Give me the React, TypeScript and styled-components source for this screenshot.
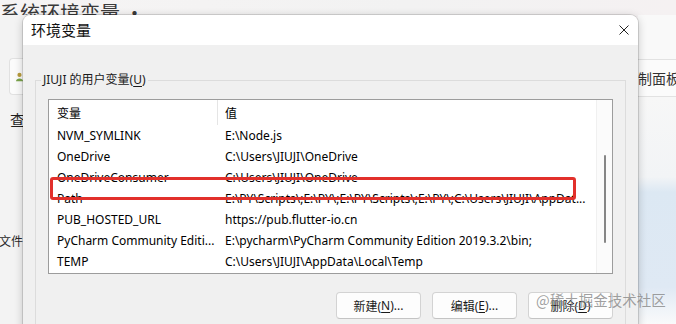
import React from "react";
import styled, { createGlobalStyle } from "styled-components";

const GlobalStyle = createGlobalStyle`
  html, body { margin: 0; padding: 0; }
  body {
    width: 676px; height: 324px; overflow: hidden; background: #f3f3f3;
    font-family: "Noto Sans", "Noto Sans CJK SC", sans-serif;
  }
  * { box-sizing: border-box; }
`;

const Desktop = styled.div`
  position: relative;
  width: 676px;
  height: 324px;
  overflow: hidden;
  background: #f3f3f3;
`;

/* ---------- background window ---------- */
const BackWindow = styled.div`
  display: flex;
  flex-direction: column;
  width: 100%;
  height: 100%;
  background: linear-gradient(90deg, #f6f4f4, #f2f2f2 60%, #f5f1f2);
`;

const BackTitle = styled.div`
  height: 15px;
  overflow: hidden;
  padding-left: 0;
  font-family: "Noto Sans CJK SC", sans-serif;
  font-size: 20px;
  line-height: 26px;
  color: #3a3a3a;
  white-space: nowrap;
`;

const BackBody = styled.div`
  flex: 1;
  display: flex;
`;

const LeftPane = styled.div`
  width: 23px;
  display: flex;
  flex-direction: column;
  padding-top: 43px;
  background: #f3f3f3;
`;

const UserCard = styled.div`
  margin-left: 9px;
  height: 37px;
  border: 1px solid #e1e1e1;
  border-right: none;
  border-radius: 4px 0 0 4px;
  background: #fbfbfb;
  display: flex;
  align-items: center;
  padding-left: 6px;
`;

const SideTab = styled.div`
  margin-top: 16px;
  margin-left: 10px;
  font-family: "Noto Sans CJK SC", sans-serif;
  font-size: 15px;
  line-height: 18px;
  color: #1f1f1f;
  white-space: nowrap;
  overflow: hidden;
`;

const SideLabel = styled.div`
  margin-top: 104px;
  margin-left: -1px;
  font-family: "Noto Sans CJK SC", sans-serif;
  font-size: 12px;
  line-height: 16px;
  color: #2a2a2a;
  white-space: nowrap;
  overflow: hidden;
`;

const MiddleGap = styled.div`
  flex: 1;
`;

const RightPane = styled.div`
  width: 38px;
  display: flex;
  flex-direction: column;
  background: #fafafa;
`;

const RightTop = styled.div`
  height: 45px;
  border-bottom: 1px solid #e2e2e2;
  background: #f9f9f9;
`;

const RightRow = styled.div`
  height: 37px;
  border-bottom: 1px solid #e2e2e2;
  display: flex;
  align-items: center;
  font-family: "Noto Sans CJK SC", sans-serif;
  font-size: 14px;
  color: #333;
  white-space: nowrap;
  overflow: hidden;
  padding-left: 0;
  background: #fbfbfb;
`;

const RightFill = styled.div`
  flex: 1;
  background: linear-gradient(180deg, #f7f7f7 0px, #f2f4f6 80px, #dce8f3 95px, #dfe9f4 190px, #eef3f8 210px, #fbfbfb 230px);
`;

/* ---------- dialog ---------- */
const Dialog = styled.div`
  position: absolute;
  left: 23px;
  top: 15px;
  width: 615px;
  height: 330px;
  display: flex;
  flex-direction: column;
  border-radius: 8px 8px 0 0;
  overflow: hidden;
  background: #f0f0f0;
  box-shadow: 0 0 0 1px rgba(0, 0, 0, 0.12), 0 2px 10px rgba(0, 0, 0, 0.22);
`;

const TitleBar = styled.div`
  height: 30px;
  flex: none;
  display: flex;
  align-items: center;
  justify-content: space-between;
  padding: 0 9px 0 8px;
  background: #ffffff;
`;

const TitleText = styled.div`
  font-family: "Noto Sans CJK SC", sans-serif;
  font-size: 15px;
  line-height: 20px;
  color: #111;
`;

const CloseButton = styled.div`
  width: 10px;
  height: 10px;
  display: flex;
`;

const DialogBody = styled.div`
  flex: 1;
  padding: 0 12px;
  display: flex;
  flex-direction: column;
`;

const Group = styled.fieldset`
  margin: 27px 0 0;
  padding: 0 12px;
  border: 1px solid #dcdcdc;
  border-bottom: none;
  min-width: 0;
  flex: 1;
`;

const GroupLegend = styled.legend`
  margin-left: -7px;
  padding: 0 2px;
  font-size: 12px;
  line-height: 16px;
  color: #1a1a1a;
`;

const Mnemonic = styled.span`
  text-decoration: underline;
  text-underline-offset: 2px;
`;

const ListBox = styled.div`
  position: relative;
  margin-top: 11px;
  height: 175px;
  border: 1px solid #9c9c9c;
  background: #ffffff;
  display: flex;
`;

const ListMain = styled.div`
  flex: 1;
  display: flex;
  flex-direction: column;
  min-width: 0;
`;

const HeaderRow = styled.div`
  height: 25px;
  flex: none;
  display: grid;
  grid-template-columns: 169px 1fr;
`;

const HeaderCell = styled.div<{ $first?: boolean }>`
  display: flex;
  align-items: center;
  padding-left: ${(p) => (p.$first ? "8px" : "7px")};
  border-right: ${(p) => (p.$first ? "1px solid #e5e5e5" : "none")};
  font-size: 12px;
  color: #000;
`;

const Row = styled.div`
  height: 21px;
  flex: none;
  display: grid;
  grid-template-columns: 169px 1fr;
`;

const Cell = styled.div<{ $first?: boolean }>`
  display: flex;
  align-items: center;
  padding-left: ${(p) => (p.$first ? "8px" : "7px")};
  font-size: 12px;
  color: #000;
  white-space: nowrap;
  overflow: hidden;
`;

const ScrollBar = styled.div`
  width: 16px;
  flex: none;
  display: flex;
  flex-direction: column;
  align-items: center;
  background: #fbfbfb;
  border-left: 1px solid #f0f0f0;
`;

const ScrollThumb = styled.div`
  margin-top: 55px;
  width: 2px;
  height: 88px;
  border-radius: 1px;
  background: #868686;
`;

const Highlight = styled.div`
  position: absolute;
  left: 1px;
  top: 77px;
  width: 526px;
  height: 23px;
  border: 3px solid #e2302b;
  border-radius: 3px;
  pointer-events: none;
`;

const ButtonRow = styled.div`
  margin-top: 18px;
  display: flex;
  justify-content: flex-end;
  gap: 11px;
`;

const Button = styled.div`
  width: 85px;
  height: 27px;
  display: flex;
  align-items: center;
  justify-content: center;
  border: 1px solid #d3d3d3;
  border-bottom-color: #c4c4c4;
  border-radius: 4px;
  background: #fdfdfd;
  font-size: 12px;
  color: #1a1a1a;
`;

const Watermark = styled.div`
  position: absolute;
  left: 536px;
  top: 290px;
  font-family: "Noto Sans CJK SC", sans-serif;
  font-size: 14.5px;
  line-height: 20px;
  color: rgba(135, 135, 135, 0.8);
  white-space: nowrap;
  pointer-events: none;
`;

const rows: [string, string][] = [
  ["NVM_SYMLINK", "E:\\Node.js"],
  ["OneDrive", "C:\\Users\\JIUJI\\OneDrive"],
  ["OneDriveConsumer", "C:\\Users\\JIUJI\\OneDrive"],
  ["Path", "E:\\PY\\Scripts\\;E:\\PY\\;E:\\PY\\Scripts\\;E:\\PY\\;C:\\Users\\JIUJI\\AppDat..."],
  ["PUB_HOSTED_URL", "https://pub.flutter-io.cn"],
  ["PyCharm Community Editi...", "E:\\pycharm\\PyCharm Community Edition 2019.3.2\\bin;"],
  ["TEMP", "C:\\Users\\JIUJI\\AppData\\Local\\Temp"],
];

const UserIcon = () => (
  <svg width="10" height="14" viewBox="0 0 10 14">
    <circle cx="5" cy="4" r="3" fill="#b89b3c" />
    <path d="M0 13 C0 8 10 8 10 13 Z" fill="#7aa34a" />
  </svg>
);

export default function App() {
  return (
    <Desktop>
      <GlobalStyle />
      <BackWindow>
        <BackTitle>系统环境变量 ·</BackTitle>
        <BackBody>
          <LeftPane>
            <UserCard>
              <UserIcon />
            </UserCard>
            <SideTab>查</SideTab>
            <SideLabel>文件</SideLabel>
          </LeftPane>
          <MiddleGap />
          <RightPane>
            <RightTop />
            <RightRow>制面板</RightRow>
            <RightFill />
          </RightPane>
        </BackBody>
      </BackWindow>

      <Dialog>
        <TitleBar>
          <TitleText>环境变量</TitleText>
          <CloseButton>
            <svg width="10" height="10" viewBox="0 0 10 10">
              <path d="M0.5 0.5 L9.5 9.5 M9.5 0.5 L0.5 9.5" stroke="#222" strokeWidth="1" />
            </svg>
          </CloseButton>
        </TitleBar>
        <DialogBody>
          <Group>
            <GroupLegend>
              JIUJI 的用户变量(<Mnemonic>U</Mnemonic>)
            </GroupLegend>
            <ListBox>
              <ListMain>
                <HeaderRow>
                  <HeaderCell $first>变量</HeaderCell>
                  <HeaderCell>值</HeaderCell>
                </HeaderRow>
                {rows.map(([k, v]) => (
                  <Row key={k}>
                    <Cell $first>{k}</Cell>
                    <Cell>{v}</Cell>
                  </Row>
                ))}
              </ListMain>
              <ScrollBar>
                <ScrollThumb />
              </ScrollBar>
              <Highlight />
            </ListBox>
            <ButtonRow>
              <Button>
                新建(<Mnemonic>N</Mnemonic>)...
              </Button>
              <Button>
                编辑(<Mnemonic>E</Mnemonic>)...
              </Button>
              <Button>
                删除(<Mnemonic>D</Mnemonic>)
              </Button>
            </ButtonRow>
          </Group>
        </DialogBody>
      </Dialog>
      <Watermark>@稀土掘金技术社区</Watermark>
    </Desktop>
  );
}
